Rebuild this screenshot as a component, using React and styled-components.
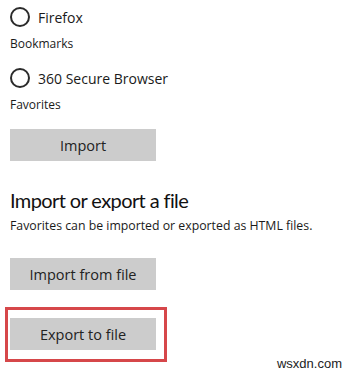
import React from "react";
import styled, { createGlobalStyle } from "styled-components";

const Global = createGlobalStyle`
  html, body { margin: 0; padding: 0; background: #fff; }
  body { width: 353px; height: 375px; overflow: hidden; font-family: "Open Sans", "Noto Sans", Arial, sans-serif; color: #1a1a1a; }
`;

const Page = styled.div`
  position: relative;
  width: 353px;
  height: 375px;
  padding: 7px 10px 0;
  box-sizing: border-box;
  display: flex;
  flex-direction: column;
  align-items: flex-start;
`;

const RadioRow = styled.label`
  display: flex;
  align-items: center;
  gap: 8px;
  height: 20px;
  font-size: 14px;
  color: #1a1a1a;
  margin-top: ${(p) => p.$top || 0}px;
`;

const Circle = styled.span`
  width: 20px;
  height: 20px;
  box-sizing: border-box;
  border: 2px solid #2b2b2b;
  border-radius: 50%;
`;

const Sub = styled.div`
  font-size: ${(p) => p.$size || 12}px;
  line-height: 16px;
  margin-top: ${(p) => p.$top || 0}px;
  color: #1a1a1a;
  white-space: nowrap;
`;

const Button = styled.button`
  width: 146px;
  height: 32px;
  border: none;
  background: #cccccc;
  font-family: inherit;
  font-size: 14.5px;
  color: #222;
  padding: 0;
  margin-top: ${(p) => p.$top || 0}px;
`;

const Heading = styled.h2`
  font-family: Lato, "Open Sans", sans-serif;
  font-size: 20px;
  font-weight: 400;
  letter-spacing: -0.6px;
  line-height: 26px;
  margin: ${(p) => p.$top || 0}px 0 0;
  color: #111;
`;

const Highlight = styled.div`
  margin: ${(p) => p.$top || 0}px 0 0 -5px;
  border: 3px solid #d6474a;
  padding: 8px 8px 9px 2px;
`;

const Watermark = styled.div`
  position: absolute;
  right: 11px;
  bottom: 4px;
  font-family: "Liberation Sans", Arial, sans-serif;
  font-size: 13px;
  color: #222;
`;

export default function App() {
  return (
    <>
      <Global />
      <Page>
        <RadioRow>
          <Circle />
          Firefox
        </RadioRow>
        <Sub $top={9}>Bookmarks</Sub>
        <RadioRow $top={16}>
          <Circle />
          360 Secure Browser
        </RadioRow>
        <Sub $top={9}>Favorites</Sub>
        <Button $top={16}>Import</Button>
        <Heading $top={26}>Import or export a file</Heading>
        <Sub $top={5} $size={12.3}>Favorites can be imported or exported as HTML files.</Sub>
        <Button $top={24}>Import from file</Button>
        <Highlight $top={17}>
          <Button>Export to file</Button>
        </Highlight>
        <Watermark>wsxdn.com</Watermark>
      </Page>
    </>
  );
}
